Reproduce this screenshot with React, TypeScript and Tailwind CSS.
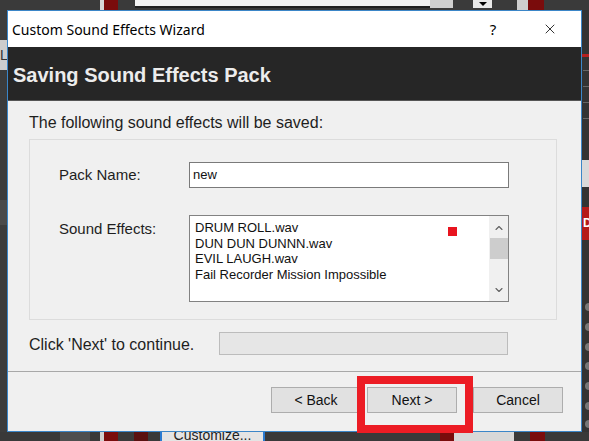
import { ChevronDown, ChevronUp, X } from 'lucide-react'

const sounds = ['DRUM ROLL.wav', 'DUN DUN DUNNN.wav', 'EVIL LAUGH.wav', 'Fail Recorder Mission Impossible']

function Backdrop() {
  return (
    <>
      {/* top strip of the app behind */}
      <div className="absolute left-0 top-0 h-[10px] w-[589px] bg-[#3a3a3a]" />
      <div className="absolute left-[100px] top-0 h-[10px] w-[4px] bg-[#d8d8d8]" />
      <div className="absolute left-[104px] top-0 h-[10px] w-[14px] bg-[#7a0c0c]" />
      <div className="absolute left-[135px] top-0 h-[8px] w-[318px] border-b-2 border-[#222] bg-[#f4f4f4]" />
      <div className="absolute left-[430px] top-0 h-[8px] w-[23px] bg-[#cfcfcf]" />
      <div className="absolute left-[473px] top-0 flex h-[8px] w-[19px] items-center justify-center bg-[#e8e8e8]">
        <div className="h-0 w-0 border-x-[4px] border-t-[4px] border-x-transparent border-t-black" />
      </div>
      <div className="absolute left-[517px] top-0 h-[10px] w-[11px] bg-[#cfcfcf]" />
      <div className="absolute left-[528px] top-0 h-[10px] w-[16px] bg-[#7a0c0c]" />

      {/* left strip */}
      <div className="absolute left-0 top-[10px] h-[431px] w-[8px] bg-[#3c3c3c]" />
      <div className="absolute left-0 top-[40px] h-[30px] w-[8px] bg-[#cdcdcd] font-['Liberation_Sans',sans-serif] text-[14px] leading-[30px] text-[#333]">
        L
      </div>
      <div className="absolute left-0 top-[200px] h-[25px] w-[8px] bg-[#4a4a4a]" />

      {/* right strip */}
      <div className="absolute left-[582px] top-[10px] h-[431px] w-[7px] bg-[#333]" />
      <div className="absolute left-[582px] top-[54px] h-[3px] w-[7px] bg-[#b52020]" />
      {[70, 86, 102, 118].map((y) => (
        <div key={y} className="absolute left-[583px] h-px w-[6px] bg-[#666]" style={{ top: y }} />
      ))}
      <div className="absolute left-[582px] top-[160px] h-[27px] w-[7px] bg-[#d9d9d9]" />
      <div className="absolute left-[582px] top-[207px] h-[33px] w-[7px] overflow-hidden bg-[#b51a1a]">
        <div className="pl-[1px] font-['Liberation_Sans',sans-serif] text-[12px] font-bold leading-[33px] text-white">
          D
        </div>
      </div>
      {[303, 323, 343, 362, 382, 402, 420].map((y) => (
        <div key={y} className="absolute left-[585px] h-[8px] w-[8px] rounded-full bg-[#777]" style={{ top: y }} />
      ))}

      {/* bottom strip */}
      <div className="absolute left-0 top-[432px] h-[9px] w-[589px] bg-[#393939]" />
      <div className="absolute left-[60px] top-[432px] h-[9px] w-[30px] bg-[#4e4e4e]" />
      <div className="absolute left-[100px] top-[432px] h-[9px] w-[4px] bg-[#d0d0d0]" />
      <div className="absolute left-[104px] top-[432px] h-[9px] w-[14px] bg-[#7a0c0c]" />
      <div className="absolute left-[134px] top-[432px] h-[9px] w-[14px] bg-[#5a1010]" />
      <div className="absolute left-[160px] top-[432px] h-[9px] w-[105px] overflow-hidden border-x-2 border-[#2a7ad0] bg-[#e4e4e4]">
        <div className="-mt-[4px] text-center font-['Liberation_Sans',sans-serif] text-[14px] leading-[14px] text-[#222]">
          Customize...
        </div>
      </div>
      <div className="absolute left-[440px] top-[432px] h-[9px] w-[14px] bg-[#7a0c0c]" />
      <div className="absolute left-[454px] top-[432px] h-[9px] w-[60px] bg-[#d8d8d8]" />
      <div className="absolute left-[530px] top-[432px] h-[9px] w-[15px] bg-[#7a0c0c]" />
    </>
  )
}

function Button({ label }: { label: string }) {
  return (
    <div className="flex h-[26px] w-[90px] items-center justify-center border border-[#adadad] bg-[#e1e1e1] text-[14px] text-[#111]">
      {label}
    </div>
  )
}

export default function App() {
  return (
    <div className="relative h-[441px] w-[589px] overflow-hidden bg-[#3a3a3a] font-['Liberation_Sans',Arial,sans-serif]">
      <Backdrop />

      {/* dialog window */}
      <div className="absolute left-[7px] top-[10px] flex h-[422px] w-[575px] flex-col border border-[#3b86c8] bg-[#f0f0f0]">
        <div className="flex h-[36px] items-center bg-white pr-[8px]">
          <div className="flex-1 pl-[4px] font-['Noto_Sans',sans-serif] text-[14px] text-black">
            Custom Sound Effects Wizard
          </div>
          <div className="flex w-[46px] items-center justify-center font-['Noto_Sans',sans-serif] text-[15px] text-black">
            ?
          </div>
          <div className="ml-[11px] flex w-[46px] items-center justify-center">
            <X className="h-[16px] w-[16px] text-black" strokeWidth={1.2} />
          </div>
        </div>

        <div className="flex h-[54px] items-center border-b border-[#555] bg-[#262626] pl-[5px] pt-[2px] text-[20px] font-bold text-[#ececec]">
          Saving Sound Effects Pack
        </div>

        <div className="flex flex-1 flex-col pl-[21px] pt-[13px] text-[#1e1e1e]">
          <div className="text-[16px] leading-[18px]">The following sound effects will be saved:</div>

          <div className="mt-[7px] flex h-[181px] w-[528px] flex-col border border-[#dcdcdc] pl-[29px] pt-[22px]">
            <div className="flex items-center">
              <div className="w-[130px] text-[15px]">Pack Name:</div>
              <div className="flex h-[26px] w-[320px] items-center border border-[#7a7a7a] bg-white pl-[3px] text-[13px] text-[#111]">
                new
              </div>
            </div>
            <div className="mt-[27px] flex items-start">
              <div className="w-[130px] pt-[3px] text-[15px]">Sound Effects:</div>
              <div className="relative flex h-[87px] w-[320px] border border-[#828282] bg-white">
                <div className="flex-1 pl-[5px] pt-[4px] text-[13px] leading-[15.6px] text-[#111]">
                  {sounds.map((s) => (
                    <div key={s}>{s}</div>
                  ))}
                </div>
                <div className="absolute left-[258px] top-[11px] h-[9px] w-[9px] bg-[#e8141f]" />
                <div className="flex w-[19px] flex-col items-center bg-[#f0f0f0]">
                  <ChevronUp className="mt-[6px] h-[12px] w-[12px] text-[#606060]" strokeWidth={2.2} />
                  <div className="mt-[4px] h-[21px] w-[18px] bg-[#cdcdcd]" />
                  <div className="flex-1" />
                  <ChevronDown className="mb-[5px] h-[12px] w-[12px] text-[#606060]" strokeWidth={2.2} />
                </div>
              </div>
            </div>
          </div>

          <div className="mt-[12px] flex items-end">
            <div className="w-[190px] pb-[1px] text-[16px] leading-[18px]">Click 'Next' to continue.</div>
            <div className="h-[23px] w-[289px] border border-[#bcbcbc] bg-[#e6e6e6]" />
          </div>
        </div>

        <div className="flex h-[60px] justify-end gap-[6px] border-t border-[#a8a8a8] pr-[18px] pt-[15px]">
          <Button label="< Back" />
          <Button label="Next >" />
          <div className="ml-[10px]">
            <Button label="Cancel" />
          </div>
        </div>
      </div>

      {/* red highlight around Next */}
      <div className="absolute left-[357px] top-[376px] h-[57px] w-[116px] border-[8px] border-[#ec1c24]" />
    </div>
  )
}
